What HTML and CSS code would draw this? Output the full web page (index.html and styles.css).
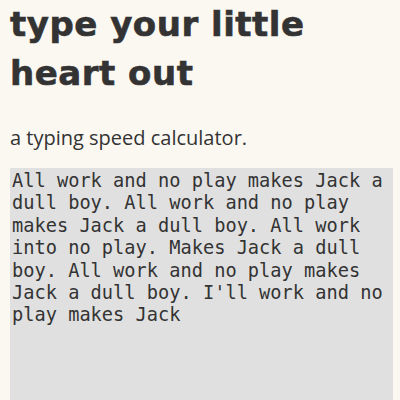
FILE: index.html
```html
<!DOCTYPE html>
<html>
<head>
<meta charset="utf-8">
<link rel="stylesheet" href="styles.css">
</head>
<body>
<main class="page">
  <h1 class="title">type your little heart out</h1>
  <p class="subtitle">a typing speed calculator.</p>
  <textarea class="typing">All work and no play makes Jack a dull boy. All work and no play makes Jack a dull boy. All work into no play. Makes Jack a dull boy. All work and no play makes Jack a dull boy. I'll work and no play makes Jack</textarea>
</main>
</body>
</html>
```
FILE: styles.css
```css
html, body {
  margin: 0;
  background: #fbf8f2;
}
body {
  color: #333333;
  font-family: "Open Sans", "Noto Sans", sans-serif;
}
.page {
  padding: 0 7px 0 10px;
}
.title {
  margin: 0;
  font-family: "DejaVu Sans", "Open Sans", sans-serif;
  font-size: 34px;
  line-height: 49px;
  font-weight: 700;
  letter-spacing: 0.5px;
  -webkit-text-stroke: 0.6px #333333;
}
.subtitle {
  margin: 26px 0 17px;
  font-size: 20px;
  line-height: 27px;
  font-weight: 400;
}
.typing {
  display: block;
  box-sizing: border-box;
  width: 383px;
  height: 260px;
  margin: 0;
  padding: 1px;
  border: 1px solid #e0e0e0;
  background: #e0e0e0;
  color: #333333;
  font-family: "DejaVu Sans Mono", monospace;
  font-size: 14pt;
  line-height: 1.2;
  resize: none;
  outline: none;
}
```
